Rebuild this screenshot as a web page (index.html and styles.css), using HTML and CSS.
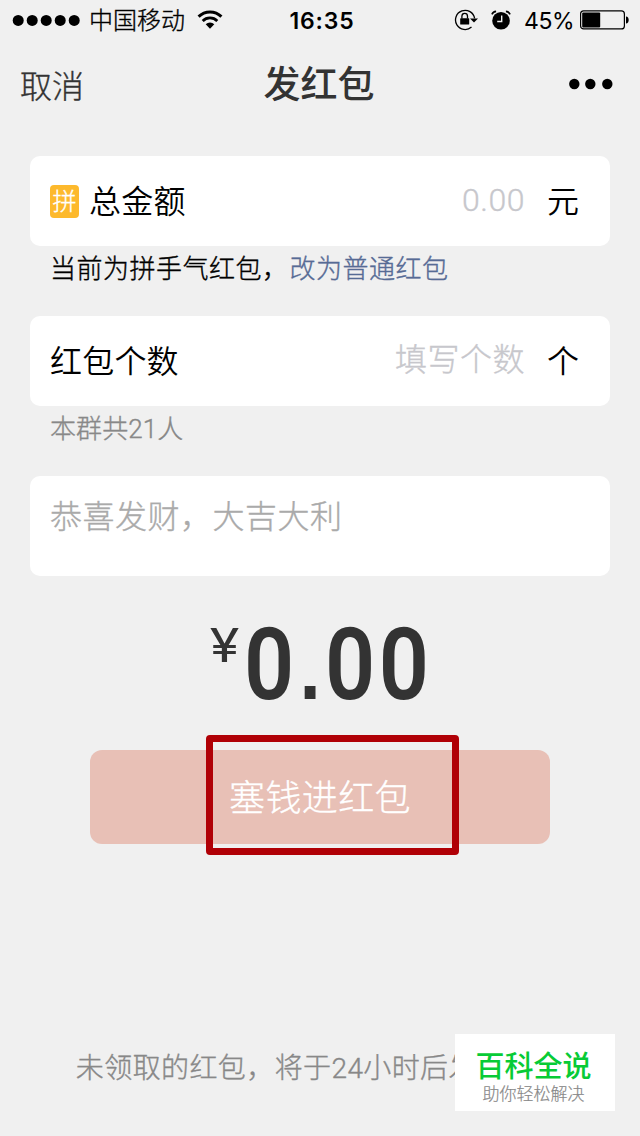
FILE: index.html
```html
<!DOCTYPE html>
<html lang="zh-CN">
<head>
    <meta charset="UTF-8">
    <meta name="viewport" content="width=device-width, initial-scale=1.0">
    <title>发红包</title>
    <link rel="stylesheet" href="styles.css">
</head>
<body>
<div class="screen">
    <div class="status-bar">
        <div class="status-left">
            <svg class="signal" width="68" height="12" viewBox="0 0 68 12">
                <circle cx="6.2" cy="6.4" r="5.5"/>
                <circle cx="20.2" cy="6.4" r="5.5"/>
                <circle cx="34.2" cy="6.4" r="5.5"/>
                <circle cx="48.2" cy="6.4" r="5.5"/>
                <circle cx="62.2" cy="6.4" r="5.5"/>
            </svg>
            <span class="carrier">中国移动</span>
            <svg class="wifi" width="26" height="20" viewBox="0 0 26 20">
                <path d="M1.6 6.6A16.2 16.2 0 0 1 24.4 6.6" fill="none" stroke="#000" stroke-width="3"/>
                <path d="M5.7 11A10.3 10.3 0 0 1 20.3 11" fill="none" stroke="#000" stroke-width="2.8"/>
                <path d="M8.7 14.3A6.2 6.2 0 0 1 17.3 14.3L13 18.8Z"/>
            </svg>
        </div>
        <div class="time">16:35</div>
        <div class="status-right">
            <svg class="lock" width="24" height="22" viewBox="0 0 24 22">
                <path d="M20.6 9.4A9.6 9.6 0 1 0 17.5 18.1" fill="none" stroke="#000" stroke-width="1.3"/>
                <path d="M16 9.4H24L20 13.6Z"/>
                <rect x="6.2" y="9.2" width="9" height="6.4" rx=".6"/>
                <path d="M7.9 9.5V7.2a2.8 2.8 0 0 1 5.6 0V9.5" fill="none" stroke="#000" stroke-width="1.3"/>
            </svg>
            <svg class="alarm" width="20" height="20" viewBox="0 0 20 20">
                <circle cx="10" cy="10.8" r="8.8"/>
                <path d="M.9 4.4A5 5 0 0 1 5.1 1.4M14.9 1.4A5 5 0 0 1 19.1 4.4" fill="none" stroke="#000" stroke-width="1.6"/>
                <path d="M10.7 5.6V11.5H6.2" fill="none" stroke="#f0f0f0" stroke-width="1.4"/>
            </svg>
            <span class="percent">45%</span>
            <svg class="battery" width="50" height="20" viewBox="0 0 50 20">
                <rect x="1.6" y=".9" width="43.8" height="18" rx="3" fill="none" stroke="#000" stroke-width="1.2"/>
                <rect x="3.2" y="2.4" width="18" height="15" rx="1"/>
                <path d="M47 6.5c3.6 0 3.6 7 0 7z"/>
            </svg>
        </div>
    </div>

    <div class="nav-bar">
        <span class="cancel">取消</span>
        <span class="title">发红包</span>
        <svg class="more" width="44" height="12" viewBox="0 0 44 12">
            <circle cx="5.3" cy="6" r="5.2"/>
            <circle cx="21.3" cy="6" r="5.2"/>
            <circle cx="38.3" cy="6" r="5.2"/>
        </svg>
    </div>

    <div class="form">
        <div class="row">
            <span class="badge">拼</span>
            <span class="label">总金额</span>
            <span class="placeholder">0.00</span>
            <span class="unit">元</span>
        </div>
        <p class="tip">当前为拼手气红包，<a class="link">改为普通红包</a></p>

        <div class="row">
            <span class="label">红包个数</span>
            <span class="placeholder">填写个数</span>
            <span class="unit">个</span>
        </div>
        <p class="tip tip-gray">本群共21人</p>

        <div class="row message">恭喜发财，大吉大利</div>
    </div>

    <div class="total">
        <span class="yen">¥</span>
        <span class="sum">0<span class="dot">.</span>00</span>
    </div>

    <div class="submit">
        塞钱进红包
        <div class="highlight"></div>
    </div>

    <div class="footer">未领取的红包，将于24小时后发起退款</div>

    <div class="watermark">
        <div class="watermark-name">百科全说</div>
        <div class="watermark-slogan">助你轻松解决</div>
    </div>
</div>
</body>
</html>
```

FILE: styles.css
```css
body {
    margin: 0;
    background-color: #f0f0f0;
    font-family: Roboto, "Noto Sans CJK SC", sans-serif;
    font-weight: 300;
    color: #000;
    -webkit-text-stroke: 0.35px;
}
.screen {
    position: relative;
    display: flex;
    flex-direction: column;
    width: 640px;
    height: 1136px;
    overflow: hidden;
}
svg {
    display: block;
    flex: none;
}

/* Status bar */
.status-bar {
    display: grid;
    grid-template-columns: 1fr auto 1fr;
    align-items: center;
    height: 40px;
    padding: 0 11px 0 12px;
}
.status-left, .status-right {
    display: flex;
    align-items: center;
}
.status-right {
    justify-content: flex-end;
}
.carrier {
    margin: 0 12px 0 9px;
    padding-top: 3px;
    font-size: 24px;
    line-height: 37px;
}
.time {
    padding: 1px 0 0 3px;
    font-family: Inter, sans-serif;
    font-size: 23px;
    font-weight: 600;
    letter-spacing: 0.8px;
    -webkit-text-stroke: 0;
}
.alarm {
    margin-left: 13px;
}
.percent {
    margin: 1px 5px 0 13px;
    font-family: Inter, sans-serif;
    font-size: 23px;
    font-weight: 400;
    letter-spacing: -0.5px;
    -webkit-text-stroke: 0;
}

/* Navigation */
.nav-bar {
    display: grid;
    grid-template-columns: 1fr auto 1fr;
    align-items: center;
    height: 88px;
    padding: 0 27px 0 20px;
    color: #333;
}
.cancel {
    font-size: 32px;
}
.title {
    padding: 0 0 5px 5px;
    font-size: 37px;
    font-weight: 500;
    -webkit-text-stroke: 0;
}
.more {
    justify-self: end;
    fill: #000;
}

/* Form rows */
.form {
    padding: 28px 30px 0;
}
.row {
    display: flex;
    align-items: center;
    box-sizing: border-box;
    height: 90px;
    padding: 0 31px 0 20px;
    background-color: #fff;
    border-radius: 10px;
    font-size: 32px;
    line-height: 48px;
}
.badge {
    width: 29px;
    height: 33px;
    margin-right: 10px;
    background-color: #fdb92c;
    border-radius: 4px;
    color: #fff;
    font-size: 24px;
    line-height: 34px;
    text-align: center;
}
.label, .unit {
    padding-top: 2px;
    font-weight: 350;
    -webkit-text-stroke: 0;
}
.label {
    letter-spacing: 0.2px;
}
.placeholder {
    margin-left: auto;
    margin-right: 22px;
    padding-bottom: 2px;
    color: #c7c7cc;
    letter-spacing: 0.5px;
}
.tip {
    height: 70px;
    margin: 0;
    padding-left: 20px;
    font-size: 26px;
    line-height: 47px;
    letter-spacing: 0.5px;
    box-sizing: border-box;
}
.tip-gray {
    color: #888;
    letter-spacing: 0.1px;
}
.link {
    margin-left: 1px;
    color: #576b95;
}
.message {
    align-items: flex-start;
    height: 100px;
    padding-top: 17px;
    color: #aaa;
    letter-spacing: 0.5px;
}

/* Total amount */
.total {
    display: flex;
    align-items: flex-start;
    height: 174px;
    padding-left: 210px;
    box-sizing: border-box;
    color: #333;
    -webkit-text-stroke: 0;
}
.yen {
    width: 34px;
    padding-top: 46px;
    font-size: 49px;
    line-height: 48px;
    font-weight: 400;
    transform: scaleX(1.13);
    transform-origin: left;
}
.sum {
    padding-top: 39px;
    font-size: 101px;
    line-height: 100px;
    font-weight: 600;
    letter-spacing: 4px;
    transform: scaleX(0.87);
    transform-origin: left;
}
.dot {
    margin: 0 1px 0 2px;
    font-family: "Liberation Sans", sans-serif;
    font-size: 88px;
    font-weight: 700;
}

/* Submit button */
.submit {
    position: relative;
    width: 460px;
    height: 94px;
    margin: 0 auto;
    background-color: #e8c0b6;
    border-radius: 12px;
    color: #fff;
    font-size: 36px;
    line-height: 98px;
    letter-spacing: 0.4px;
    text-align: center;
}
.highlight {
    position: absolute;
    top: -15px;
    left: 116px;
    width: 239px;
    height: 106px;
    border: 7px solid #b00006;
    border-radius: 4px;
}

.footer {
    margin-top: auto;
    padding: 0 2px 46px 0;
    color: #888;
    font-size: 28px;
    line-height: 42px;
    letter-spacing: 0.4px;
    text-align: center;
    white-space: nowrap;
}

.watermark {
    position: absolute;
    right: 25px;
    bottom: 25px;
    width: 160px;
    height: 77px;
    box-sizing: border-box;
    padding: 15px 3px 0 0;
    background-color: #fff;
    text-align: center;
    -webkit-text-stroke: 0;
}
.watermark-name {
    color: #07cb36;
    font-size: 29px;
    line-height: 36px;
    font-weight: 500;
}
.watermark-slogan {
    color: #888;
    font-size: 17px;
    line-height: 18px;
    -webkit-text-stroke: 0.2px;
}
```
